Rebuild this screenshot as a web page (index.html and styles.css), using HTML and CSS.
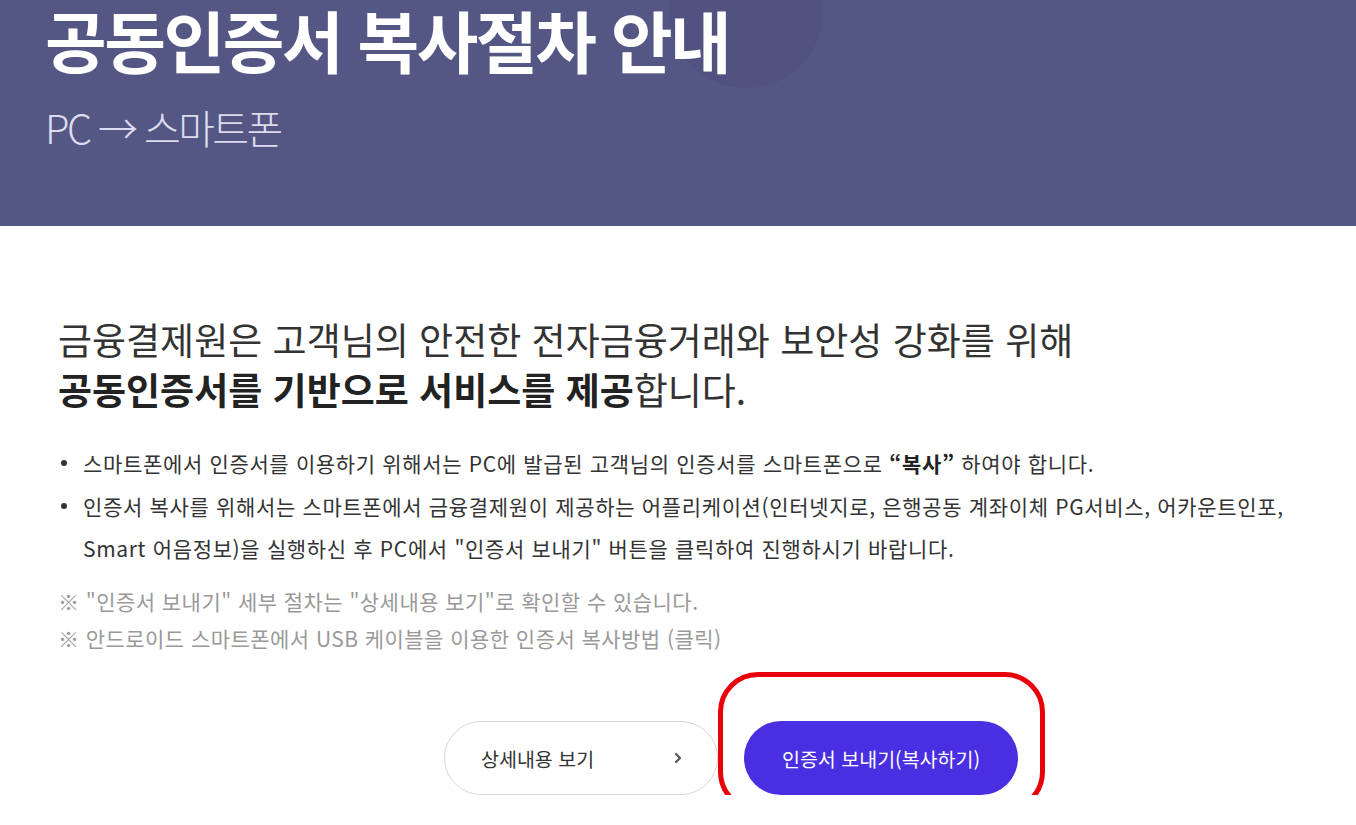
FILE: index.html
```html
<!DOCTYPE html>
<html lang="ko">
<head>
<meta charset="utf-8">
<title>공동인증서 복사절차 안내</title>
<link rel="stylesheet" href="styles.css">
</head>
<body>
<header class="hero">
  <span class="hero-circle"></span>
  <h1 class="hero-title">공동인증서 복사절차 안내</h1>
  <p class="hero-sub">PC → 스마트폰</p>
</header>
<main class="content">
  <p class="lead">금융결제원은 고객님의 안전한 전자금융거래와 보안성 강화를 위해<br><strong>공동인증서를 기반으로 서비스를 제공</strong>합니다.</p>
  <ul class="bullets">
    <li>스마트폰에서 인증서를 이용하기 위해서는 PC에 발급된 고객님의 인증서를 스마트폰으로 <strong>“복사”</strong> 하여야 합니다.</li>
    <li>인증서 복사를 위해서는 스마트폰에서 금융결제원이 제공하는 어플리케이션(인터넷지로, 은행공동 계좌이체 PG서비스, 어카운트인포, Smart 어음정보)을 실행하신 후 PC에서 "인증서 보내기" 버튼을 클릭하여 진행하시기 바랍니다.</li>
  </ul>
  <div class="notes">
    <p>※ "인증서 보내기" 세부 절차는 "상세내용 보기"로 확인할 수 있습니다.</p>
    <p>※ 안드로이드 스마트폰에서 USB 케이블을 이용한 인증서 복사방법 (클릭)</p>
  </div>
  <div class="actions">
    <a class="btn btn-outline" href="#">
      <span>상세내용 보기</span>
      <svg class="chev" width="10" height="14" viewBox="0 0 10 14"><polyline points="3,3 7,7 3,11" fill="none" stroke="#555" stroke-width="2.2" stroke-linecap="round" stroke-linejoin="round"/></svg>
    </a>
    <div class="send-wrap">
      <a class="btn btn-primary" href="#">인증서 보내기(복사하기)</a>
      <span class="highlight"></span>
    </div>
  </div>
</main>
</body>
</html>
```

FILE: styles.css
```css
* { box-sizing: border-box; }
html, body { margin: 0; padding: 0; }
body {
  font-family: "Noto Sans CJK KR", "Noto Sans", sans-serif;
  color: #333;
  background: #fff;
  overflow: hidden;
}
.hero {
  position: relative;
  height: 226px;
  background: #545684;
  padding: 2px 0 0 45px;
  overflow: hidden;
}
.hero-circle {
  position: absolute;
  left: 669px;
  top: -66px;
  width: 154px;
  height: 154px;
  border-radius: 50%;
  background: #515280;
}
.hero-title {
  position: relative;
  margin: 0;
  font-size: 67px;
  line-height: 74px;
  font-weight: 700;
  color: #fff;
  letter-spacing: -2.4px;
}
.hero-sub {
  position: relative;
  margin: 27px 0 0;
  font-size: 40px;
  line-height: 48px;
  font-weight: 300;
  color: #dcdcee;
  letter-spacing: -2.6px;
}
.content {
  padding: 88px 0 0 58px;
}
.lead {
  margin: 0;
  font-size: 37px;
  line-height: 50px;
  letter-spacing: 0;
  color: #333;
}
.lead strong { font-weight: 700; color: #222; }
.bullets {
  list-style: none;
  margin: 28px 0 0;
  padding: 0 0 0 25px;
  width: 1250px;
}
.bullets li {
  position: relative;
  font-size: 21px;
  line-height: 42px;
  letter-spacing: 0.66px;
  color: #333;
  margin-bottom: 1px;
}
.bullets li::before {
  content: "";
  position: absolute;
  left: -22px;
  top: 18px;
  width: 6px;
  height: 6px;
  border-radius: 50%;
  background: #333;
}
.bullets strong { font-weight: 700; color: #222; }
.notes {
  margin-top: 14px;
}
.notes p {
  margin: 0;
  font-size: 21px;
  line-height: 37px;
  letter-spacing: 0.45px;
  color: #999;
}
.actions {
  display: flex;
  gap: 26px;
  margin-top: 64px;
  padding-left: 386px;
}
.btn {
  display: flex;
  align-items: center;
  width: 274px;
  height: 74px;
  border-radius: 37px;
  text-decoration: none;
  font-size: 19.5px;
  letter-spacing: 0;
}
.btn-outline {
  border: 1px solid #d8d8d8;
  background: #fff;
  color: #333;
  justify-content: space-between;
  padding: 0 34px 0 36px;
}
.chev { display: block; }
.btn-primary {
  background: #4a2ee2;
  color: #fff;
  justify-content: center;
}
.send-wrap {
  position: relative;
}
.highlight {
  position: absolute;
  left: -26px;
  top: -49px;
  width: 327px;
  height: 140px;
  border: 5px solid #e8000b;
  border-radius: 40px;
  pointer-events: none;
}
```
